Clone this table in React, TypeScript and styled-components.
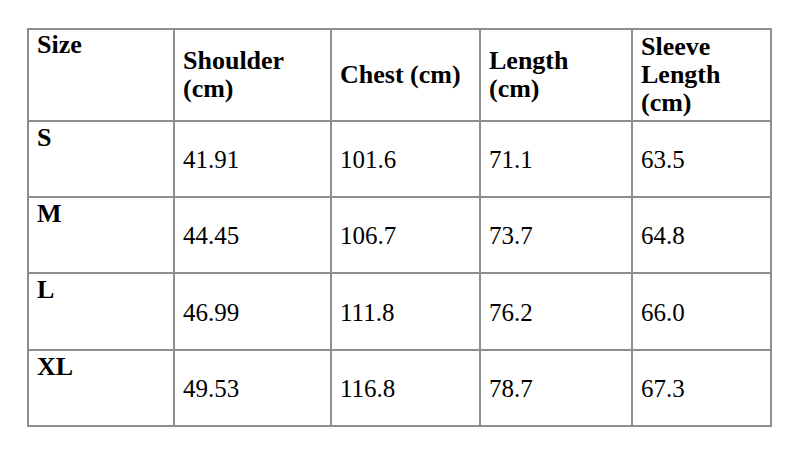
import React from "react";
import styled, { createGlobalStyle } from "styled-components";

const Global = createGlobalStyle`
  html, body { margin: 0; padding: 0; background: #ffffff; }
  body { font-family: "Liberation Serif", "Times New Roman", serif; color: #000; }
`;

const Page = styled.div`
  width: 800px;
  height: 463px;
  padding: 28px 0 0 27px;
  box-sizing: border-box;
`;

const Table = styled.table`
  border-collapse: collapse;
  table-layout: fixed;
  width: 743px;
  font-family: "Liberation Serif", "Times New Roman", serif;
  font-size: 25px;
  line-height: 28px;
`;

const Col = styled.col<{ $w: number }>`
  width: ${(p) => p.$w}px;
`;

const HeaderRow = styled.tr`
  height: 92px;
`;

const BodyRow = styled.tr<{ $h: number }>`
  height: ${(p) => p.$h}px;
`;

const Th = styled.th<{ $top?: boolean }>`
  border: 2px solid #8e8e8e;
  padding: 1px 6px 1px 8px;
  text-align: left;
  font-weight: bold;
  font-size: 26px;
  line-height: 28.3px;
  vertical-align: ${(p) => (p.$top ? "top" : "middle")};
`;

const LabelCell = styled.td`
  border: 2px solid #8e8e8e;
  padding: 2px 8px;
  font-weight: bold;
  font-size: 26px;
  vertical-align: top;
`;

const ValueCell = styled.td`
  border: 2px solid #8e8e8e;
  padding: 2px 8px 0 8px;
  vertical-align: middle;
`;

const rows = [
  { size: "S", vals: ["41.91", "101.6", "71.1", "63.5"], h: 76 },
  { size: "M", vals: ["44.45", "106.7", "73.7", "64.8"], h: 76 },
  { size: "L", vals: ["46.99", "111.8", "76.2", "66.0"], h: 77 },
  { size: "XL", vals: ["49.53", "116.8", "78.7", "67.3"], h: 76 },
];

export default function App() {
  return (
    <>
      <Global />
      <Page>
        <Table>
          <colgroup>
            <Col $w={146} />
            <Col $w={157} />
            <Col $w={149} />
            <Col $w={152} />
            <Col $w={139} />
          </colgroup>
          <thead>
            <HeaderRow>
              <Th $top>Size</Th>
              <Th>
                Shoulder
                <br />
                (cm)
              </Th>
              <Th>Chest (cm)</Th>
              <Th>
                Length
                <br />
                (cm)
              </Th>
              <Th>
                Sleeve
                <br />
                Length
                <br />
                (cm)
              </Th>
            </HeaderRow>
          </thead>
          <tbody>
            {rows.map((r) => (
              <BodyRow key={r.size} $h={r.h}>
                <LabelCell>{r.size}</LabelCell>
                {r.vals.map((v, i) => (
                  <ValueCell key={i}>{v}</ValueCell>
                ))}
              </BodyRow>
            ))}
          </tbody>
        </Table>
      </Page>
    </>
  );
}
